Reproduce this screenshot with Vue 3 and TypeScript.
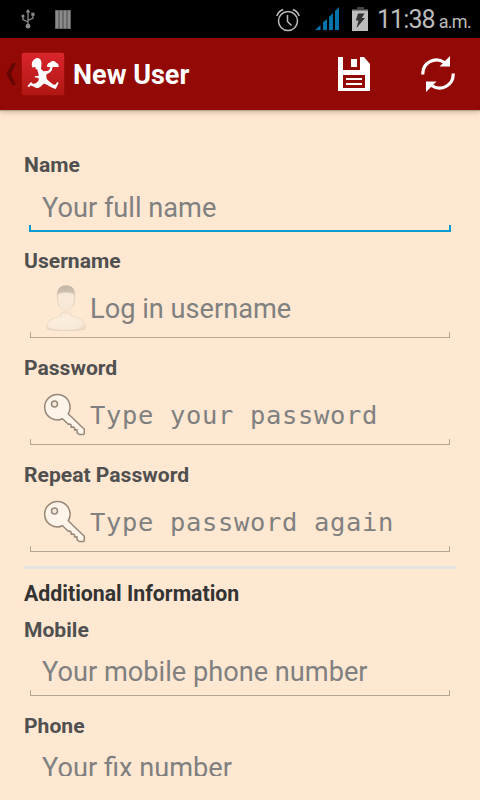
<script setup lang="ts">
interface Field {
  label: string
  hint: string
  icon?: 'user' | 'key'
  mono?: boolean
  focused?: boolean
}

const account: Field[] = [
  { label: 'Name', hint: 'Your full name', focused: true },
  { label: 'Username', hint: 'Log in username', icon: 'user' },
  { label: 'Password', hint: 'Type your password', icon: 'key', mono: true },
  { label: 'Repeat Password', hint: 'Type password again', icon: 'key', mono: true },
]
const additional: Field[] = [
  { label: 'Mobile', hint: 'Your mobile phone number' },
  { label: 'Phone', hint: 'Your fix number' },
]
const sections = [
  { title: '', fields: account },
  { title: 'Additional Information', fields: additional },
]
</script>

<template>
  <div class="screen">
    <div class="status">
      <svg class="usb" width="14" height="20" viewBox="0 0 14 20" fill="none" stroke="#8b8b8b" stroke-width="1.3">
        <path d="M7 3v13M7 13L2 10.5V7.500M7 11.500l5-2.500V6" />
        <path d="M7 0l2.300 3.500H4.700zM10.300 3.800h3.200v3h-3.200z" fill="#8b8b8b" stroke="none" />
        <circle cx="2" cy="7" r="1.600" fill="#8b8b8b" stroke="none" />
        <circle cx="7" cy="17.200" r="2.400" fill="#8b8b8b" stroke="none" />
      </svg>
      <svg class="bars" width="16" height="19" viewBox="0 0 16 19">
        <path d="M0 0h16v19H0z" fill="#4b4b4b" />
        <path d="M.5.500h3v18h-3zM4.500.500h3v18h-3zM8.500.500h3v18h-3zM12.500.500h2.800v18h-2.800z" fill="#8b8b8b" />
      </svg>
      <span class="spacer"></span>
      <svg class="alarm" width="24" height="24" viewBox="0 0 24 24" fill="none" stroke="#bcbcbc" stroke-width="1.500">
        <circle cx="12" cy="13" r="9.500" />
        <path d="M11.500 7v6.500l4 4M.8 8C2 4.500 4 2.500 7.200 1.500M23.200 8C22 4.500 20 2.500 16.800 1.500" />
      </svg>
      <svg class="signal" width="24" height="23" viewBox="0 0 24 23" fill="#0473a9">
        <path d="M0 23l5.500-5v5zM8 23v-8l4-3v11zM14 23V10l4-4v17zM20 23V4l4-4v23z" />
      </svg>
      <svg class="battery" width="16" height="24" viewBox="0 0 16 24">
        <path d="M5 0h7v2h4v2H0V2h5z" fill="#454545" />
        <path d="M0 3.500h16V24H0z" fill="#bdbdbd" />
        <path d="M6 6.500h6.500L9.800 11H13l-8.500 10 2-7.500H3.800z" fill="#343434" />
      </svg>
      <span class="clock">11:38</span><span class="ampm">a.m.</span>
    </div>

    <header class="bar">
      <svg class="back" width="10" height="22" viewBox="0 0 10 22"><path d="M10 0H6.500L0 11l6.500 11H10L5 11z" fill="#650603" /></svg>
      <svg class="logo" width="44" height="44" viewBox="0 0 44 44">
        <defs>
          <linearGradient id="tile" x1="0" y1="0" x2="0" y2="1">
            <stop offset="0" stop-color="#da252d" /><stop offset="1" stop-color="#af1712" />
          </linearGradient>
        </defs>
        <rect x=".8" y=".8" width="42.400" height="42.400" rx="2" fill="url(#tile)" />
        <path fill="#fff" d="M11.500 15.500C9.500 11.500 12 6.500 16 6c4-.3 5 4 4.300 7.500l-.3 3.500 2.500 2.200 4.700-.5c1.200-.6 1.900-1.800 2-3.400l-3.200-.5c-.2-3 1.800-4.300 3.400-4.400 1.600-2 4.800-1.500 5.600.4 2 .4 3 2.400 2.600 4.200l-6-.1c-.3 3-1.400 5-3.600 6l-2.500 1.300c-.4 2.200-.1 4.300 1.100 5.800l5.400 4.500 2.400.3 1.800-2.700 1.500.6-3 6.300-1.500-.6c-3.300-.6-6.200-3.600-10.200-4.900-2 1.600-4 4.700-7.200 4.500-2.200-.2-4-2-6-2.500L8 35.300 6.500 34l3.500-4 1.800 1.700c2.500.4 4.700-1.200 5.900-3.400l-.2-2.300-3.800-.8.1-.9 4-.6c-.2-2.200-1.100-4.100-1.600-6.100l-1.700-.8.1-1.800z" />
      </svg>
      <h1>New User</h1>
      <span class="spacer"></span>
      <svg class="save" width="32" height="34" viewBox="0 0 32 34">
        <path fill="#fff" fill-rule="evenodd" d="M0 0h5v13h17V0h4l6 7v27H0zM5 18v13h22V18z" />
        <path d="M13 2h6v8h-6zM8 21h16v2H8zM8 26h16v2H8z" fill="#fff" />
      </svg>
      <svg class="refresh" width="34" height="36" viewBox="0 0 34 36">
        <g fill="none" stroke="#fff" stroke-width="3.200">
          <path d="M1.800 18.500C1.300 6.500 14 .2 23.500 6.500" />
          <path d="M32.200 17.500C32.700 29.500 20 35.800 10.500 29.500" />
        </g>
        <path d="M29 0v10.500H18.500L24 5zM5 36V25.500h10.500L10 31z" fill="#fff" />
      </svg>
    </header>

    <main class="form">
      <section v-for="(section, i) in sections" :key="i" :class="{ divided: section.title }">
        <h2 v-if="section.title">{{ section.title }}</h2>
        <div v-for="field in section.fields" :key="field.label" class="field">
          <label>{{ field.label }}</label>
          <div class="input" :class="{ tall: field.icon, focused: field.focused }">
            <svg v-if="field.icon === 'user'" class="icon" width="48" height="48" viewBox="0 0 48 48">
              <defs>
                <linearGradient id="hair" x1="0" y1="0" x2="0" y2="1">
                  <stop offset="0" stop-color="#c2b5a5" /><stop offset="1" stop-color="#e9dac8" />
                </linearGradient>
                <radialGradient id="body" cx=".45" cy=".4" r=".65">
                  <stop offset="0" stop-color="#fcefe0" /><stop offset=".8" stop-color="#f9e9d7" /><stop offset="1" stop-color="#ecdccb" />
                </radialGradient>
              </defs>
              <ellipse cx="24" cy="45" rx="19" ry="2" fill="#d5c3af" opacity=".65" />
              <path d="M19 29v3c-7 2-14 3-14.500 12 8 3.500 31 3.500 39 0-.5-9-7.500-10-14.500-12v-3z" fill="url(#body)" stroke="#e5d4c0" stroke-width=".7" />
              <path d="M15 14C14 5 18 1.300 24 1.300S34 5 33 14l-1 8H16z" fill="url(#hair)" />
              <path d="M16 10c4-2 12-2 16 0 1.500 7-1 16-8 17-7-1-9.500-10-8-17z" fill="#f7e8d7" stroke="#e2d1be" stroke-width=".6" />
            </svg>
            <svg v-if="field.icon === 'key'" class="icon key" width="48" height="48" viewBox="0 0 48 48" fill="#fff4e9" stroke="#968879" stroke-width="1.500" stroke-linejoin="round">
              <path d="M26.200 21.800A12.700 12.700 0 1 0 20.500 26.800l5.800 5.400 1.200-.2 1.400.7.400 2.600 2.300-.3 1.100 1.200-.2 1.700 2.500-.2.200 3.200 2.100 1.600h4.400l.6-1.200v-4.100z" />
              <circle cx="12.500" cy="12" r="3" fill="#f5e7d8" />
            </svg>
            <span class="hint" :class="{ mono: field.mono }">{{ field.hint }}</span>
          </div>
        </div>
      </section>
    </main>
  </div>
</template>

<style>
body { background: #ffe8d2; }
</style>

<style scoped>
.screen { width: 480px; height: 800px; overflow: hidden; display: flex; flex-direction: column; background: #ffe8d2; font-family: Roboto, sans-serif; }
.screen svg { flex: none; display: block; }
.status { height: 38px; flex: none; display: flex; align-items: center; background: #000; color: #bcbcbc; padding: 0 9px 0 21px; }
.bars { margin-left: 20px; }
.spacer { flex: 1; }
.alarm { margin-top: 2px; }
.signal { margin-left: 15px; margin-bottom: 2px; }
.battery { margin-left: 13px; margin-bottom: 1px; }
.clock { margin-left: 9px; font-size: 25px; letter-spacing: -.9px; line-height: 38px; padding-top: 2px; }
.ampm { margin-left: 4px; font-size: 18px; letter-spacing: -.7px; line-height: 38px; padding-top: 6px; }
.bar { height: 72px; flex: none; display: flex; align-items: center; background: #930906; padding: 0 25px 0 6px; position: relative; box-shadow: 0 1px 1px #bda692, 0 3px 5px rgba(80, 50, 25, .22); }
.logo { margin-left: 5px; }
h1 { margin: 0 0 0 8px; color: #fff; font-size: 27px; line-height: 32px; padding-top: 2px; font-weight: 700; }
.refresh { margin-left: 51px; }
.form { height: 626px; padding: 40px 24px 0; overflow: hidden; box-sizing: content-box; margin-bottom: 24px; min-height: 0; }
.divided { border-top: 3px solid #e6e4e2; margin-top: -1px; padding-top: 11px; }
h2 { margin: 0 0 8px; font-size: 21.300px; line-height: 27px; color: #333; font-weight: 700; }
label { display: block; font-size: 21.100px; line-height: 29px; color: #505050; font-weight: 700; }
.input { height: 53px; margin: 0 5px 14px; display: flex; align-items: center; padding: 4px 13px 0; position: relative; box-sizing: border-box; }
.divided .input { height: 52px; padding-top: 4px; margin-bottom: 15px; }
.input::after { content: ''; position: absolute; left: 1px; right: 1px; bottom: 0; height: 5px; border: 1px solid #b5a595; border-top: 0; }
.input.focused::after { left: 0; right: 0; border: 2px solid #0a9dcb; border-top: 0; }
.input.tall { height: 63px; padding-top: 4px; margin-bottom: 15px; }
.input.tall .hint { padding-top: 1px; }
.input.tall .mono { padding: 0 0 1px; }
.icon { margin-top: -2px; }
.icon.key { margin-top: 1px; }
.hint { font-size: 27.200px; line-height: 32px; color: #808080; white-space: nowrap; }
.mono { font-family: 'DejaVu Sans Mono', monospace; font-size: 25.500px; letter-spacing: .65px; }
</style>
